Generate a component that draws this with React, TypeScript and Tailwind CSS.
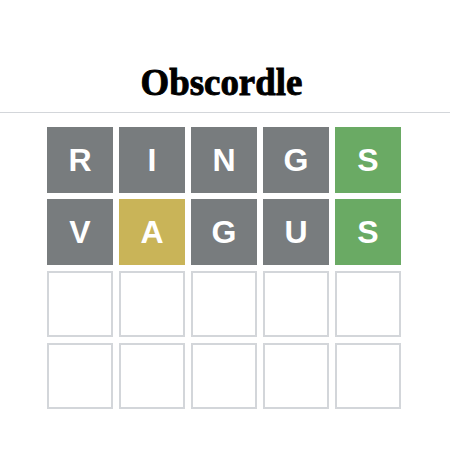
type Cell = { ch: string; state: "absent" | "present" | "correct" | "empty" };

const ROWS: Cell[][] = [
  [
    { ch: "R", state: "absent" },
    { ch: "I", state: "absent" },
    { ch: "N", state: "absent" },
    { ch: "G", state: "absent" },
    { ch: "S", state: "correct" },
  ],
  [
    { ch: "V", state: "absent" },
    { ch: "A", state: "present" },
    { ch: "G", state: "absent" },
    { ch: "U", state: "absent" },
    { ch: "S", state: "correct" },
  ],
  Array.from({ length: 5 }, () => ({ ch: "", state: "empty" as const })),
  Array.from({ length: 5 }, () => ({ ch: "", state: "empty" as const })),
];

const tileColor = {
  absent: "bg-[#787c7e] border-[#787c7e]",
  present: "bg-[#c9b458] border-[#c9b458]",
  correct: "bg-[#6aaa64] border-[#6aaa64]",
  empty: "bg-white border-[#d3d6da]",
};

function Tile({ cell }: { cell: Cell }) {
  return (
    <div
      className={`flex h-[66px] w-[66px] items-center justify-center border-2 text-[32px] font-bold text-white ${tileColor[cell.state]}`}
      style={{ fontFamily: '"Liberation Sans", Arial, sans-serif' }}
    >
      {cell.ch}
    </div>
  );
}

export default function App() {
  return (
    <div className="h-[450px] w-[450px] bg-white">
      <header className="flex h-[113px] items-end justify-center border-b border-[#d3d6da] pb-[11px] pr-[8px]">
        {/* heavy slab look for the wordmark */}
        <h1
          className="scale-x-[0.97] text-[38px] font-bold leading-none text-black [-webkit-text-stroke:0.9px_black]"
          style={{ fontFamily: '"Liberation Serif", "Times New Roman", serif' }}
        >
          Obscordle
        </h1>
      </header>
      <div className="mt-[14px] flex flex-col items-center gap-[6px] pr-[2px]">
        {ROWS.map((row, r) => (
          <div key={r} className="flex gap-[6px]">
            {row.map((cell, c) => (
              <Tile key={c} cell={cell} />
            ))}
          </div>
        ))}
      </div>
    </div>
  );
}
